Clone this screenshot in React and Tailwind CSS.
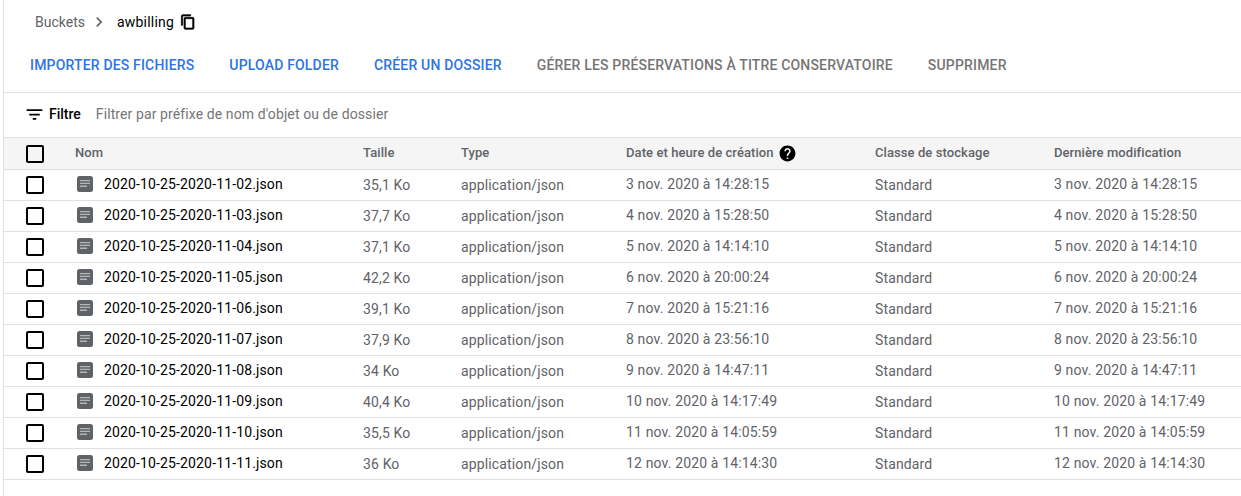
import React from "react";

const files = [
  ["2020-10-25-2020-11-02.json", "35,1 Ko", "3 nov. 2020 à 14:28:15"],
  ["2020-10-25-2020-11-03.json", "37,7 Ko", "4 nov. 2020 à 15:28:50"],
  ["2020-10-25-2020-11-04.json", "37,1 Ko", "5 nov. 2020 à 14:14:10"],
  ["2020-10-25-2020-11-05.json", "42,2 Ko", "6 nov. 2020 à 20:00:24"],
  ["2020-10-25-2020-11-06.json", "39,1 Ko", "7 nov. 2020 à 15:21:16"],
  ["2020-10-25-2020-11-07.json", "37,9 Ko", "8 nov. 2020 à 23:56:10"],
  ["2020-10-25-2020-11-08.json", "34 Ko", "9 nov. 2020 à 14:47:11"],
  ["2020-10-25-2020-11-09.json", "40,4 Ko", "10 nov. 2020 à 14:17:49"],
  ["2020-10-25-2020-11-10.json", "35,5 Ko", "11 nov. 2020 à 14:05:59"],
  ["2020-10-25-2020-11-11.json", "36 Ko", "12 nov. 2020 à 14:14:30"],
];

const cols = "grid grid-cols-[71px_288px_98px_165px_249px_179px_1fr] items-center";

function Checkbox() {
  return <div className="ml-[22px] h-[18px] w-[18px] rounded-[2px] border-2 border-black" />;
}

function FileIcon() {
  return (
    <svg width="16" height="16" viewBox="0 0 16 16" className="ml-[2px] shrink-0">
      <rect x="0" y="0" width="16" height="16" rx="2.5" fill="#5f6368" />
      <path d="M3 4h10v1.3H3zM3 6.8h10v1.3H3zM3 9.6h7v1.3H3z" fill="#b4b6b9" />
    </svg>
  );
}

function App() {
  return (
    <div className="h-[496px] w-[1241px] overflow-hidden bg-white font-['Roboto',sans-serif]">
      <div className="ml-[3px] h-full border-l border-[#e0e0e0]">
        <div className="flex h-[44px] items-center pl-[31px] text-[14px]">
          <span className="text-[#5f6368]">Buckets</span>
          <svg width="20" height="20" viewBox="0 0 24 24" className="ml-[4px] mr-[8px]" fill="#5f6368">
            <path d="M8.6 16.6 13.2 12 8.6 7.4 10 6l6 6-6 6z" />
          </svg>
          <span className="tracking-[0.2px] text-black">awbilling</span>
          <svg width="16" height="16" viewBox="0 0 24 24" className="ml-[6px]" fill="#000" stroke="#000" strokeWidth="1">
            <path d="M16 1H4c-1.1 0-2 .9-2 2v14h2V3h12V1zm3 4H8c-1.1 0-2 .9-2 2v14c0 1.1.9 2 2 2h11c1.1 0 2-.9 2-2V7c0-1.1-.9-2-2-2zm0 16H8V7h11v14z" />
          </svg>
        </div>

        <div className="flex h-[49px] items-center gap-[35px] border-b border-[#e0e0e0] pb-[5px] pl-[26px] text-[14px] font-medium tracking-[0.17px]">
          <span className="text-[#2f74e0]">IMPORTER DES FICHIERS</span>
          <span className="text-[#2f74e0]">UPLOAD FOLDER</span>
          <span className="text-[#2f74e0]">CRÉER UN DOSSIER</span>
          <span className="text-[#757575]">GÉRER LES PRÉSERVATIONS À TITRE CONSERVATOIRE</span>
          <span className="text-[#757575]">SUPPRIMER</span>
        </div>

        <div className="flex h-[45px] items-center border-b border-[#e0e0e0] pb-[2px] pl-[20px] text-[14px]">
          <svg width="21" height="21" viewBox="0 0 24 24" fill="#000">
            <path d="M10 18h4v-2h-4v2zM3 6v2h18V6H3zm3 7h12v-2H6v2z" />
          </svg>
          <span className="ml-[4px] font-medium text-black">Filtre</span>
          <span className="ml-[15px] tracking-[0.1px] text-[#757575]">Filtrer par préfixe de nom d'objet ou de dossier</span>
        </div>

        <div className={`${cols} h-[32px] border-b border-[#e0e0e0] bg-[#f5f5f5] text-[13px] font-medium tracking-[0.08px] text-[#5f6368]`}>
          <Checkbox />
          <span className="pb-[2px]">Nom</span>
          <span className="pb-[2px]">Taille</span>
          <span className="pb-[2px]">Type</span>
          <span className="flex items-center gap-[4px]">
            <span className="pb-[2px]">Date et heure de création</span>
            <svg width="19" height="19" viewBox="0 0 24 24" fill="#000">
              <path d="M12 2C6.48 2 2 6.48 2 12s4.48 10 10 10 10-4.48 10-10S17.52 2 12 2zm1 17h-2v-2h2v2zm2.07-7.75-.9.92C13.45 12.9 13 13.5 13 15h-2v-.5c0-1.1.45-2.1 1.17-2.83l1.24-1.26c.37-.36.59-.86.59-1.41 0-1.1-.9-2-2-2s-2 .9-2 2H8c0-2.21 1.79-4 4-4s4 1.79 4 4c0 .88-.36 1.68-.93 2.25z" />
            </svg>
          </span>
          <span className="pb-[2px]">Classe de stockage</span>
          <span className="pb-[2px]">Dernière modification</span>
        </div>

        {files.map(([name, size, date]) => (
          <div key={name} className={`${cols} h-[31px] border-b border-[#e0e0e0] text-[14px] tracking-[0.14px] text-[#5f6368]`}>
            <Checkbox />
            <span className="flex items-center gap-[11px] pb-[2px] text-black">
              <FileIcon />
              {name}
            </span>
            <span>{size}</span>
            <span>application/json</span>
            <span className="pb-[2px]">{date}</span>
            <span>Standard</span>
            <span className="pb-[2px]">{date}</span>
          </div>
        ))}
      </div>
    </div>
  );
}

export default App;
